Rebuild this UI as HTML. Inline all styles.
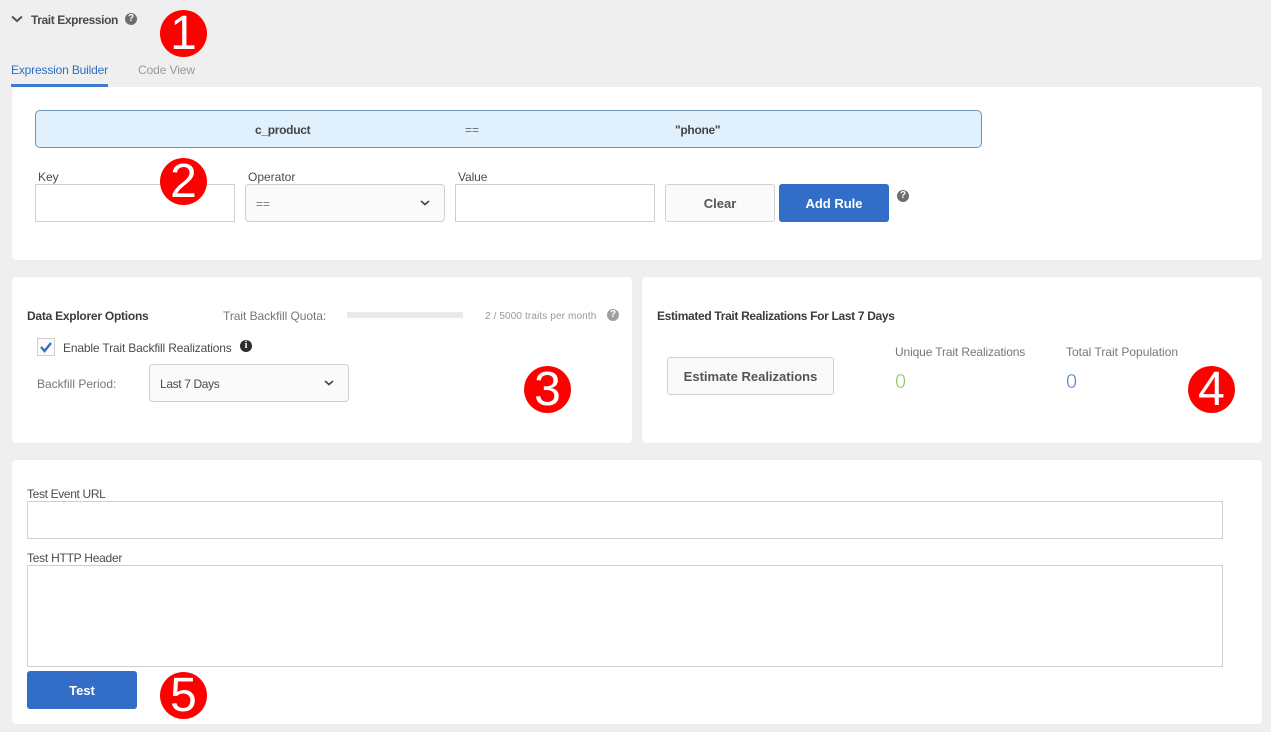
<!DOCTYPE html>
<html><head><meta charset="utf-8"><style>
html,body{margin:0;padding:0;width:1271px;height:732px;overflow:hidden;background:#efefef;font-family:"Liberation Sans",sans-serif;}
div{position:absolute;box-sizing:border-box}
.p{background:#fff;border-radius:4px;box-shadow:0 0 1px #e2e2e2}
.t{white-space:nowrap;font-size:12px;line-height:16px;color:#4b4b4b}
.b{font-weight:bold}
.i{background:#fff;border:1px solid #cfcfcf}
.s{background:#fafafa;border:1px solid #cfcfcf;border-radius:4px}
.btn{border-radius:3px;text-align:center;font-weight:bold;font-size:13px;line-height:36px;padding-top:1px;white-space:nowrap}
.c{width:47px;height:47px;border-radius:50%;background:#f00;color:#fff;font-size:48px;line-height:47px;text-align:center}
.q{width:12px;height:12px;border-radius:50%;background:#6e6e6e;color:#fff;font-size:10px;line-height:12px;text-align:center;font-weight:bold}
.z{font-size:20px;line-height:24px;-webkit-text-stroke:.5px #fff}
svg{position:absolute;overflow:visible}
</style></head><body>
<svg style="left:11px;top:15px" width="12" height="8"><path d="M1 1.5L6 6L11 1.5" fill="none" stroke="#555" stroke-width="2"/></svg>
<div class="t b" style="left:31px;top:12px;color:#4b4b4b;letter-spacing:-.4px">Trait Expression</div>
<div class="q" style="left:125px;top:13px">?</div>
<div class="t" style="left:11px;top:62px;color:#2f6dc6;letter-spacing:-.17px">Expression Builder</div>
<div class="t" style="left:138px;top:62px;color:#999;letter-spacing:-.1px">Code View</div>

<div class="p" style="left:12px;top:87px;width:1250px;height:173px"></div>
<div style="left:11px;top:84px;width:97px;height:3px;background:#3f78cf"></div>
<div style="left:35px;top:110px;width:947px;height:38px;background:#e0f0fd;border:1px solid #6f94b8;border-radius:5px"></div>
<div class="t b" style="left:255px;top:122px;color:#444;letter-spacing:-.3px">c_product</div>
<div class="t" style="left:465px;top:122px;color:#666">==</div>
<div class="t b" style="left:675px;top:122px;color:#444;letter-spacing:-.3px">"phone"</div>

<div class="t" style="left:38px;top:169px">Key</div>
<div class="t" style="left:248px;top:169px">Operator</div>
<div class="t" style="left:458px;top:169px;letter-spacing:-.1px">Value</div>
<div class="i" style="left:35px;top:184px;width:200px;height:38px"></div>
<div class="s" style="left:245px;top:184px;width:200px;height:38px"></div>
<div class="t" style="left:256px;top:196px;color:#777">==</div>
<svg style="left:420px;top:200px" width="10" height="6"><path d="M1 1L5 4.5L9 1" fill="none" stroke="#444" stroke-width="1.6"/></svg>
<div class="i" style="left:455px;top:184px;width:200px;height:38px"></div>
<div class="btn" style="left:665px;top:184px;width:110px;height:38px;background:#fafafa;border:1px solid #d2d2d2;color:#555">Clear</div>
<div class="btn" style="left:779px;top:184px;width:110px;height:38px;line-height:37px;background:#326ec8;color:#fff">Add Rule</div>
<div class="q" style="left:897px;top:190px">?</div>

<div class="p" style="left:12px;top:277px;width:620px;height:166px"></div>
<div class="t b" style="left:27px;top:308px;color:#3c3c3c;letter-spacing:-.25px">Data Explorer Options</div>
<div class="t" style="left:223px;top:308px;color:#777;letter-spacing:-.05px">Trait Backfill Quota:</div>
<div style="left:347px;top:312px;width:116px;height:6px;background:#eaeaea"></div>
<div class="t" style="left:485px;top:309px;font-size:10px;color:#999;letter-spacing:.12px">2 / 5000 traits per month</div>
<div class="q" style="left:607px;top:309px;background:#a0a0a0">?</div>
<div style="left:37px;top:338px;width:18px;height:18px;background:#fbfbfb;border:1px solid #cfcfcf"></div>
<svg style="left:39px;top:340px" width="14" height="14"><path d="M2 7L5.5 11L12 3" fill="none" stroke="#326ec8" stroke-width="2.4"/></svg>
<div class="t" style="left:63px;top:340px;color:#4b4b4b;letter-spacing:-.16px">Enable Trait Backfill Realizations</div>
<div class="q" style="left:240px;top:340px;background:#2c2c2c;font-family:'Liberation Serif',serif">i</div>
<div class="t" style="left:37px;top:376px;color:#777">Backfill Period:</div>
<div class="s" style="left:149px;top:364px;width:200px;height:38px"></div>
<div class="t" style="left:160px;top:376px;color:#4b4b4b;letter-spacing:-.36px">Last 7 Days</div>
<svg style="left:324px;top:380px" width="10" height="6"><path d="M1 1L5 4.5L9 1" fill="none" stroke="#444" stroke-width="1.6"/></svg>

<div class="p" style="left:642px;top:277px;width:620px;height:166px"></div>
<div class="t b" style="left:657px;top:308px;color:#3c3c3c;letter-spacing:-.33px">Estimated Trait Realizations For Last 7 Days</div>
<div class="btn" style="left:667px;top:357px;width:167px;height:38px;background:#fafafa;border:1px solid #d2d2d2;color:#555">Estimate Realizations</div>
<div class="t" style="left:895px;top:344px;color:#777;letter-spacing:-.13px">Unique Trait Realizations</div>
<div class="t" style="left:1066px;top:344px;color:#777">Total Trait Population</div>
<div class="t z" style="left:895px;top:370px;color:#8cc560">0</div>
<div class="t z" style="left:1066px;top:370px;color:#5b7dbd">0</div>

<div class="p" style="left:12px;top:460px;width:1250px;height:264px"></div>
<div class="t" style="left:27px;top:486px;letter-spacing:-.35px">Test Event URL</div>
<div class="i" style="left:27px;top:501px;width:1196px;height:38px"></div>
<div class="t" style="left:27px;top:550px;letter-spacing:-.25px">Test HTTP Header</div>
<div class="i" style="left:27px;top:565px;width:1196px;height:102px"></div>
<div class="btn" style="left:27px;top:671px;width:110px;height:38px;line-height:37px;background:#326ec8;color:#fff">Test</div>

<div class="c" style="left:160px;top:10px">1</div>
<div class="c" style="left:160px;top:158px">2</div>
<div class="c" style="left:524px;top:366px">3</div>
<div class="c" style="left:1188px;top:366px">4</div>
<div class="c" style="left:160px;top:672px">5</div>
</body></html>
